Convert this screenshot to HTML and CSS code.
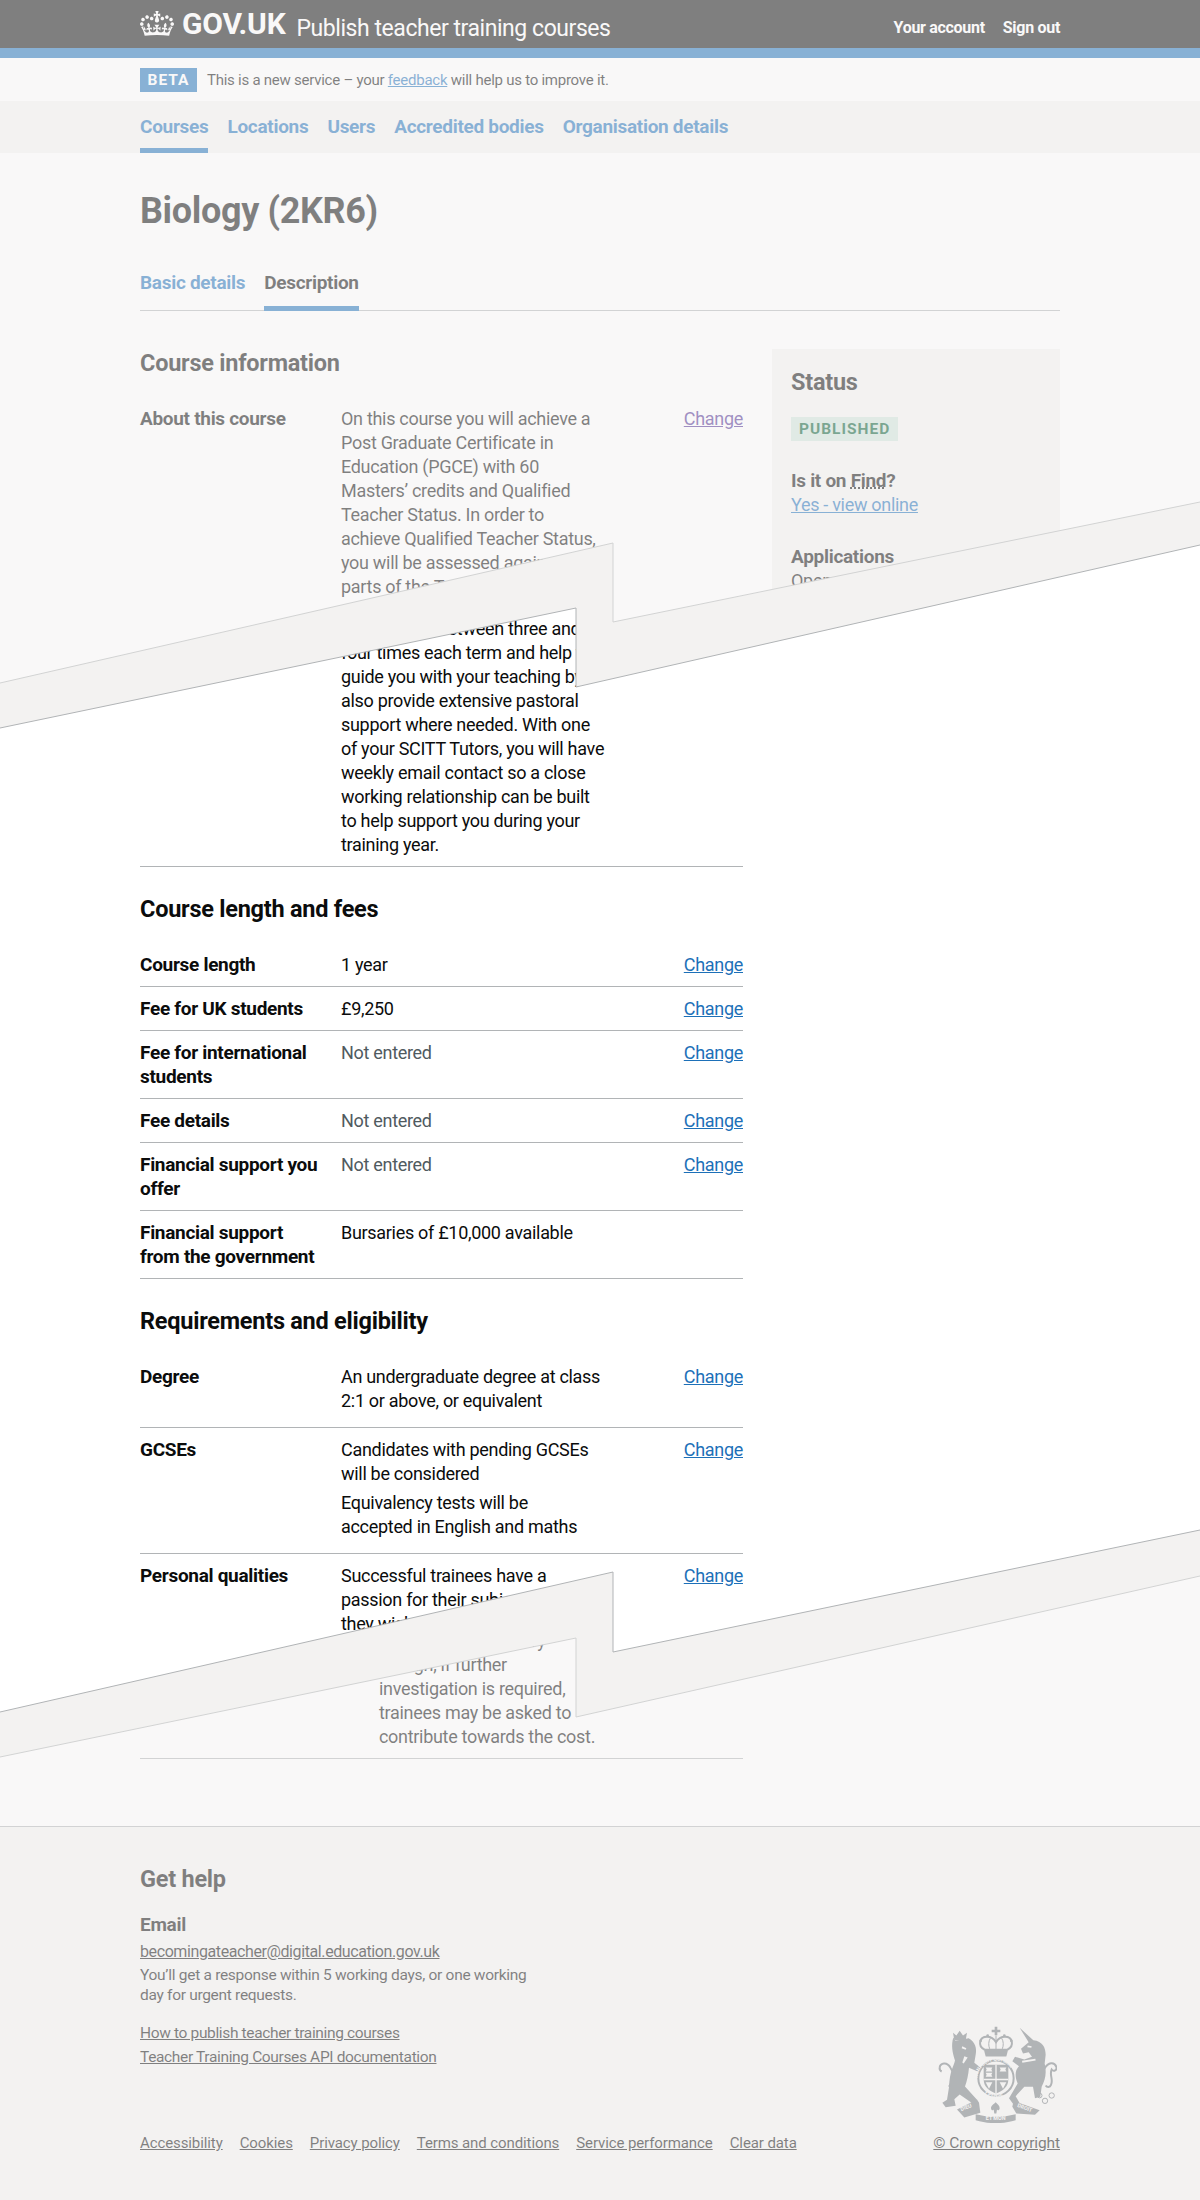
FILE: index.html
```html
<!DOCTYPE html>
<html lang="en">
  <head>
    <meta charset="UTF-8" />
    <meta name="viewport" content="width=device-width, initial-scale=1.0" />
    <title>Biology (2KR6) - Publish teacher training courses</title>
    <link rel="stylesheet" href="styles.css">
  </head>
  <body>
    <header class="site-header">
      <div class="wrap site-header-inner">
        <a class="logo" href="#">
          <svg class="crown" viewBox="0 0 132 97" aria-hidden="true">
            <path fill="currentColor" fill-rule="evenodd" d="M25 30.2c3.5 1.5 7.7-.2 9.1-3.7 1.5-3.6-.2-7.8-3.9-9.2-3.6-1.4-7.6.3-9.1 3.9-1.4 3.5.3 7.5 3.9 9zM9 39.5c3.6 1.5 7.8-.2 9.2-3.7 1.5-3.6-.2-7.8-3.9-9.1-3.6-1.5-7.6.2-9.1 3.8-1.4 3.5.3 7.5 3.8 9zM4.4 57.2c3.5 1.5 7.7-.2 9.1-3.8 1.5-3.6-.2-7.7-3.9-9.1-3.5-1.5-7.6.3-9.1 3.8-1.4 3.5.3 7.6 3.9 9.1zm38.3-21.4c3.5 1.5 7.7-.2 9.1-3.8 1.5-3.6-.2-7.7-3.9-9.1-3.6-1.5-7.6.3-9.1 3.8-1.3 3.6.4 7.7 3.9 9.1zm64.4-5.6c-3.6 1.5-7.8-.2-9.1-3.7-1.5-3.6.2-7.8 3.8-9.2 3.6-1.4 7.7.3 9.2 3.9 1.3 3.5-.4 7.5-3.9 9zm15.9 9.3c-3.6 1.5-7.7-.2-9.1-3.7-1.5-3.6.2-7.8 3.7-9.1 3.6-1.5 7.7.2 9.2 3.8 1.5 3.5-.3 7.5-3.8 9zm4.7 17.7c-3.6 1.5-7.8-.2-9.2-3.8-1.5-3.6.2-7.7 3.9-9.1 3.6-1.5 7.7.3 9.2 3.8 1.3 3.5-.4 7.6-3.9 9.1zM89.3 35.8c-3.6 1.5-7.8-.2-9.2-3.8-1.4-3.6.2-7.7 3.9-9.1 3.6-1.5 7.7.3 9.2 3.8 1.4 3.6-.3 7.7-3.9 9.1zM69.7 17.7l8.9 4.7V9.3l-8.9 2.8c-.2-.3-.5-.6-.9-.9L72.4 0H59.6l3.5 11.2c-.3.3-.6.5-.9.9l-8.8-2.8v13.1l8.8-4.7c.3.3.6.7.9.9l-5 15.4v.1c-.2.8-.4 1.6-.4 2.4 0 4.1 3.1 7.5 7 8.1h.2c.3 0 .7.1 1 .1.4 0 .7 0 1-.1h.2c4-.6 7.1-4.1 7.1-8.1 0-.8-.1-1.7-.4-2.4V34l-5.1-15.4c.4-.2.7-.6 1-.9zM66 92.8c16.9 0 32.8 1.1 47.1 3.2 4-16.9 8.9-26.7 14-33.5l-9.6-3.4c1 4.9 1.1 7.2 0 10.2-1.5-1.4-3-4.3-4.2-8.7L108.6 76c2.8-2 5-3.2 7.5-3.3-4.4 9.4-10 11.9-13.6 11.2-4.3-.8-6.3-4.6-5.6-7.9 1-4.7 5.7-5.9 8-.5 4.3-8.7-3-11.4-7.6-8.8 7.1-7.2 7.9-13.5 2.1-21.1-8 6.1-8.1 12.3-4.5 20.8-4.7-5.4-12.1-2.5-9.5 6.2 3.4-5.2 7.9-2 7.2 3.1-.6 4.3-6.4 7.8-13.5 7.2-10.3-.9-10.9-8-11.2-13.8 2.5-.5 7.1 1.8 11 7.3L80.2 60c-4.1 4.4-8 5.3-12.3 5.4 1.4-4.4 8-11.6 8-11.6H55.5s6.4 7.2 7.9 11.6c-4.2-.1-8-1-12.3-5.4l1.4 16.4c3.9-5.5 8.5-7.7 10.9-7.3-.3 5.8-.9 12.8-11.1 13.8-7.2.6-12.9-2.9-13.5-7.2-.7-5 3.8-8.3 7.1-3.1 2.7-8.7-4.6-11.6-9.4-6.2 3.7-8.5 3.6-14.7-4.6-20.8-5.8 7.6-5 13.9 2.2 21.1-4.7-2.6-11.9.1-7.7 8.8 2.3-5.5 7.1-4.2 8.1.5.7 3.3-1.3 7.1-5.7 7.9-3.5.7-9-1.8-13.5-11.2 2.5.1 4.7 1.3 7.5 3.3l-4.7-15.4c-1.2 4.4-2.7 7.2-4.3 8.7-1.1-3-.9-5.3 0-10.2l-9.5 3.4c5 6.9 9.9 16.7 14 33.5 14.8-2.1 30.8-3.2 47.7-3.2z"/>
          </svg>
          <span class="logo-text">GOV.UK</span>
        </a>
        <a class="service-name" href="#">Publish teacher training courses</a>
        <nav class="account-links">
          <a href="#">Your account</a>
          <a href="#">Sign out</a>
        </nav>
      </div>
    </header>

    <div class="wrap beta-banner">
      <strong class="beta-tag">BETA</strong>
      <span>This is a new service – your <a href="#">feedback</a> will help us to improve it.</span>
    </div>

    <nav class="org-nav">
      <ul class="wrap">
        <li><a class="active" href="#">Courses</a></li>
        <li><a href="#">Locations</a></li>
        <li><a href="#">Users</a></li>
        <li><a href="#">Accredited bodies</a></li>
        <li><a href="#">Organisation details</a></li>
      </ul>
    </nav>

    <main class="wrap">
      <h1>Biology (2KR6)</h1>

      <ul class="tabs">
        <li><a href="#">Basic details</a></li>
        <li><a class="active" href="#">Description</a></li>
      </ul>

      <div class="columns">
        <div class="details">
          <h2>Course information</h2>
          <dl class="summary">
            <div class="row">
              <dt>About this course</dt>
              <dd class="value">
                <p>On this course you will achieve a<br>Post Graduate Certificate in<br>Education (PGCE) with 60<br>Masters’ credits and Qualified<br>Teacher Status. In order to<br>achieve Qualified Teacher Status,<br>you will be assessed against all<br>parts of the Teachers’ Standards.</p>
                <p class="after-tear">will visit you between three and<br>four times each term and help to<br>guide you with your teaching by<br>also provide extensive pastoral<br>support where needed. With one<br>of your SCITT Tutors, you will have<br>weekly email contact so a close<br>working relationship can be built<br>to help support you during your<br>training year.</p>
              </dd>
              <dd class="action"><a class="visited" href="#">Change</a></dd>
            </div>
          </dl>

          <h2>Course length and fees</h2>
          <dl class="summary">
            <div class="row">
              <dt>Course length</dt>
              <dd class="value">1 year</dd>
              <dd class="action"><a href="#">Change</a></dd>
            </div>
            <div class="row">
              <dt>Fee for UK students</dt>
              <dd class="value">£9,250</dd>
              <dd class="action"><a href="#">Change</a></dd>
            </div>
            <div class="row">
              <dt>Fee for international<br>students</dt>
              <dd class="value muted">Not entered</dd>
              <dd class="action"><a href="#">Change</a></dd>
            </div>
            <div class="row">
              <dt>Fee details</dt>
              <dd class="value muted">Not entered</dd>
              <dd class="action"><a href="#">Change</a></dd>
            </div>
            <div class="row">
              <dt>Financial support you<br>offer</dt>
              <dd class="value muted">Not entered</dd>
              <dd class="action"><a href="#">Change</a></dd>
            </div>
            <div class="row">
              <dt>Financial support<br>from the government</dt>
              <dd class="value">Bursaries of £10,000 available</dd>
              <dd class="action"></dd>
            </div>
          </dl>

          <h2>Requirements and eligibility</h2>
          <dl class="summary">
            <div class="row">
              <dt>Degree</dt>
              <dd class="value"><p class="spaced">An undergraduate degree at class<br>2:1 or above, or equivalent</p></dd>
              <dd class="action"><a href="#">Change</a></dd>
            </div>
            <div class="row">
              <dt>GCSEs</dt>
              <dd class="value">
                <p class="spaced">Candidates with pending GCSEs<br>will be considered</p>
                <p class="spaced">Equivalency tests will be<br>accepted in English and maths</p>
              </dd>
              <dd class="action"><a href="#">Change</a></dd>
            </div>
            <div class="row">
              <dt>Personal qualities</dt>
              <dd class="value">
                <p>Successful trainees have a<br>passion for their subject and<br>they wish to share it with others.</p>
                <p class="indented">checks are necessary<br>though, if further<br>investigation is required,<br>trainees may be asked to<br>contribute towards the cost.</p>
              </dd>
              <dd class="action"><a href="#">Change</a></dd>
            </div>
          </dl>
        </div>

        <aside class="status-panel">
          <h3>Status</h3>
          <strong class="tag">Published</strong>
          <h4>Is it on <abbr title="Find postgraduate teacher training">Find</abbr>?</h4>
          <a href="#">Yes - view online</a>
          <h4>Applications</h4>
          <p>Open</p>
        </aside>
      </div>
    </main>

    <footer class="site-footer">
      <div class="wrap footer-grid">
        <div class="help">
          <h2>Get help</h2>
          <h4>Email</h4>
          <a class="email" href="#">becomingateacher@digital.education.gov.uk</a>
          <p>You’ll get a response within 5 working days, or one working<br>day for urgent requests.</p>
          <ul class="help-links">
            <li><a href="#">How to publish teacher training courses</a></li>
            <li><a href="#">Teacher Training Courses API documentation</a></li>
          </ul>
        </div>
        <ul class="meta-links">
          <li><a href="#">Accessibility</a></li>
          <li><a href="#">Cookies</a></li>
          <li><a href="#">Privacy policy</a></li>
          <li><a href="#">Terms and conditions</a></li>
          <li><a href="#">Service performance</a></li>
          <li><a href="#">Clear data</a></li>
        </ul>
        <div class="copyright">
          <svg class="crest" viewBox="110 80 360 290" aria-hidden="true">
            <defs>
              <path id="garter-top" d="M231 240a56 56 0 0 1 112 0"/>
              <path id="garter-bottom" d="M236 262a58 58 0 0 0 102 0"/>
            </defs>
            <g fill="currentColor">
              <!-- crown -->
              <path d="M283 82h8v9h9v7h-9v9h-8v-9h-9v-7h9z"/>
              <path class="crest-line" d="M252 150c-20-10-16-38 8-38 12 0 21 6 27 16 6-10 15-16 27-16 24 0 28 28 8 38"/>
              <path class="crest-line thin" d="M287 108v42M270 116c-6 10-6 22-2 32M304 116c6 10 6 22 2 32"/>
              <path d="M250 148h74l-6 23h-62z"/>
              <circle cx="241" cy="124" r="4"/><circle cx="333" cy="124" r="4"/><circle cx="262" cy="108" r="4"/><circle cx="312" cy="108" r="4"/>
              <!-- garter and shield -->
              <circle class="crest-line" cx="287" cy="236" r="53" stroke-width="21"/>
              <path d="M250 196h74v44c0 22-17 35-37 42-20-7-37-20-37-42z"/>
              <path class="crest-cut" d="M285 196h4v86h-4zM250 238h74v4h-74z"/>
              <path class="crest-cut" d="M256 204l20 0-3 6 3 6h-20l3-6zM298 204l20 0-3 6 3 6h-20l3-6zM256 220h20l-3 6 3 6h-20l3-6zM298 248h20l-10 20zM256 248h20l-10 20z"/>
              <!-- lion -->
              <path d="M162 122l-4-22 10 8 10-14 10 14 12-8-4 22z"/>
              <path d="M165 124l40-8c20 12 25 30 21 50l-4 24 18 14-8 12-26-11c-2 22-6 40-12 56l36 40-12 12-40-28-16 14 4 20-30 4-10-13 14-9 6-38c2-48 14-62 18-80-8-24-12-46-5-69z"/>
              <path class="crest-cut" d="M186 140l12 6-2 5-12-5zM192 170l10 4-12 18-4-3z"/>
              <path class="crest-line" d="M146 262c18-28 14-44 4-58-10-18-30-14-32 0-1 6 2 10 6 12"/>
              <!-- unicorn -->
              <path d="M358 85l41 37c28 3 37 22 37 44l-3 26c7 32 1 50-9 70l-4 30-16 4-6-34h-26l-26 28 16 28-16 6-20-28 26-44c-12-28-4-44 4-52l-20-15 8-13 28 8 23-8-10-14-17 4-6-14 23-20z"/>
              <path class="crest-cut" d="M382 138l12 2-1 5-12-2zM365 184l40-6 1 5-40 7z"/>
              <path class="crest-line" d="M432 208c12-20 30-22 36-6 3 10-8 16-14 8-8 16 6 30-2 46-3 8-12 8-16 2"/>
              <circle class="crest-line thin" cx="418" cy="288" r="7"/>
              <circle class="crest-line thin" cx="434" cy="304" r="8"/>
              <circle class="crest-line thin" cx="454" cy="288" r="8"/>
              <!-- motto scroll -->
              <path d="M170 330l60-30 6 10 4 30-48 14z"/>
              <path d="M226 344c40 10 80 10 120 0v18c-40 12-80 12-120 0z"/>
              <path d="M340 304l78 28-14 14-56-4-12-20z"/>
              <path d="M286 308c6 6 12 10 12 18 0 6-6 8-8 4l-2 12h-6l-2-12c-2 4-8 2-8-4 0-8 8-12 14-18z"/>
            </g>
            <g class="crest-text">
              <text font-size="15"><textPath href="#garter-top" startOffset="4">HONI SOIT QUI MAL</textPath></text>
              <text font-size="15"><textPath href="#garter-bottom" startOffset="24">Y PENSE</textPath></text>
              <text x="183" y="335" font-size="16" transform="rotate(-22 183 335)">DIEU</text>
              <text x="286" y="362" font-size="16" text-anchor="middle">ET MON</text>
              <text x="350" y="322" font-size="16" transform="rotate(20 350 322)">DROIT</text>
            </g>
          </svg>
          <a href="#">© Crown copyright</a>
        </div>
      </div>
    </footer>

    <svg class="tear" viewBox="0 0 1200 2200" aria-hidden="true">
      <polygon class="fade" points="0,0 1200,0 1200,502 613,622 613,543 0,683" />
      <polygon class="band" points="0,683 613,543 613,622 1200,502 1200,545 576,687 576,608 0,728" />
      <polyline class="edge soft" points="0,683 613,543 613,622 1200,502" />
      <polyline class="edge" points="0,728 576,608 576,687 1200,545" />

      <polygon class="fade" points="0,1757 576,1638 576,1717 1200,1576 1200,2200 0,2200" />
      <polygon class="band" points="0,1712 613,1572 613,1652 1200,1530 1200,1576 576,1717 576,1638 0,1757" />
      <polyline class="edge" points="0,1712 613,1572 613,1652 1200,1530" />
      <polyline class="edge soft" points="0,1757 576,1638 576,1717 1200,1576" />
    </svg>
  </body>
</html>
```

FILE: styles.css
```css
* {
  box-sizing: border-box;
}
body {
  margin: 0;
  position: relative;
  font-family: Roboto, "Noto Sans", sans-serif;
  font-size: 18px;
  line-height: 24px;
  letter-spacing: -0.3px;
  color: #0b0c0c;
  background: #fff;
}
a {
  color: #1d70b8;
}
ul,
dl,
dd,
p,
h1,
h2,
h3,
h4 {
  margin: 0;
  padding: 0;
}
ul {
  list-style: none;
}
.wrap {
  width: 920px;
  margin: 0 auto;
}

/* header */
.site-header {
  background: #0b0c0c;
  border-bottom: 10px solid #1d70b8;
  height: 58px;
  color: #fff;
}
.site-header a {
  color: #fff;
  text-decoration: none;
}
.site-header-inner {
  display: flex;
  align-items: baseline;
  height: 48px;
}
.logo {
  display: flex;
  align-items: center;
  gap: 8px;
  height: 48px;
  margin-right: 11px;
}
.crown {
  width: 34px;
  height: 25px;
  margin-top: -2px;
}
.logo-text {
  font-size: 30px;
  font-weight: 700;
  letter-spacing: -0.2px;
}
.service-name {
  font-size: 23px;
  letter-spacing: -0.45px;
}
.account-links {
  display: flex;
  align-self: flex-start;
  gap: 18px;
  margin-left: auto;
  padding-top: 16px;
  font-size: 16px;
  font-weight: 700;
}

/* beta */
.beta-banner {
  display: flex;
  align-items: center;
  gap: 10px;
  height: 43px;
  font-size: 15px;
  letter-spacing: -0.25px;
}
.beta-tag {
  background: #1d70b8;
  color: #fff;
  height: 24px;
  width: 57px;
  text-align: center;
  letter-spacing: 1px;
  font-size: 15.5px;
}

/* navs */
.org-nav {
  background: #f3f2f1;
  height: 52px;
}
.org-nav ul {
  display: flex;
  gap: 19px;
}
.org-nav a {
  display: block;
  height: 52px;
  padding-top: 14px;
  font-size: 19px;
  font-weight: 700;
  text-decoration: none;
}
a.active {
  border-bottom: 5px solid #1d70b8;
}
h1 {
  margin-top: 38px;
  font-size: 36px;
  line-height: 40px;
  font-weight: 700;
  letter-spacing: -0.35px;
}
.tabs {
  display: flex;
  gap: 19px;
  height: 72px;
  margin-top: 8px;
  padding-top: 32px;
  border-bottom: 1px solid #b1b4b6;
}
.tabs a {
  display: block;
  height: 40px;
  font-size: 19px;
  font-weight: 700;
  text-decoration: none;
}
.tabs a.active {
  color: #0b0c0c;
}
.tabs li {
  height: 40px;
}

/* main */
main {
  padding-bottom: 67px;
}
.columns {
  display: grid;
  grid-template-columns: 603px 288px;
  justify-content: space-between;
  margin-top: 38px;
  align-items: start;
}
h2 {
  font-size: 23.5px;
  line-height: 30px;
  font-weight: 700;
  margin: 27px 0 19px;
  letter-spacing: -0.25px;
}
.details > h2:first-child {
  margin-top: -1px;
}
.row {
  display: flex;
  padding: 10px 0 9px;
  border-bottom: 1px solid #b1b4b6;
}
.row dt {
  width: 201px;
  font-size: 19px;
  font-weight: 700;
}
.value {
  flex: 1;
}
.value.muted {
  color: #505a5f;
}
.value .after-tear {
  margin-top: 18px;
}
.value .spaced {
  margin-bottom: 5px;
}
.value .indented {
  margin-top: -7px;
  padding-left: 38px;
}
.action {
  text-align: right;
}
a.visited {
  color: #4c2c92;
}

/* status */
.status-panel {
  background: #f3f2f1;
  padding: 18px 19px;
  height: 290px;
  clip-path: polygon(0 0, 100% 0, 100% 207px, 0 272px);
}
.status-panel h3 {
  font-size: 23.5px;
  line-height: 30px;
  font-weight: 700;
  letter-spacing: -0.25px;
}
.tag {
  display: inline-block;
  margin: 20px 0 28px;
  padding: 0 8px;
  height: 24px;
  background: #cce2d8;
  color: #005a30;
  font-size: 15.5px;
  text-transform: uppercase;
  letter-spacing: 1px;
}
.status-panel h4 {
  font-size: 19px;
  font-weight: 700;
}
.status-panel a + h4 {
  margin-top: 28px;
}
abbr {
  text-decoration: underline dotted;
}

/* footer */
.site-footer {
  background: #f3f2f1;
  border-top: 1px solid #b1b4b6;
  height: 375px;
  font-size: 15.5px;
}
.site-footer a {
  color: #0b0c0c;
}
.footer-grid {
  display: grid;
  grid-template-columns: 1fr auto;
  padding-top: 37px;
}
.help {
  grid-column: 1;
}
.help h2 {
  margin: 0 0 19px;
}
.help h4 {
  font-size: 19px;
  font-weight: 700;
  margin-bottom: 3px;
}
.help .email {
  display: block;
  font-size: 16px;
  letter-spacing: -0.4px;
  margin-bottom: 1px;
}
.help p {
  line-height: 20px;
}
.help-links {
  margin-top: 16px;
  letter-spacing: -0.35px;
}
.meta-links {
  grid-column: 1;
  display: flex;
  gap: 17px;
  margin-top: 62px;
  font-size: 15px;
  letter-spacing: -0.1px;
}
.copyright {
  grid-column: 2;
  grid-row: 1 / span 2;
  align-self: end;
  display: flex;
  flex-direction: column;
  align-items: flex-end;
  letter-spacing: -0.1px;
}
.crest {
  width: 120px;
  height: 97px;
  color: #6f777b;
  margin: 0 3px 8px 0;
}
.crest-line {
  fill: none;
  stroke: currentColor;
  stroke-width: 6;
}
.crest-line.thin {
  stroke-width: 3;
}
.crest-cut {
  fill: #f3f2f1;
}
.crest-text {
  fill: #f3f2f1;
  font-weight: 700;
  letter-spacing: 0;
}

/* torn page overlay */
.tear {
  position: absolute;
  top: 0;
  left: 0;
  width: 1200px;
  height: 2200px;
  pointer-events: none;
}
.fade {
  fill: #f3f2f1;
  opacity: 0.5;
}
.band {
  fill: #f3f2f1;
}
.edge {
  fill: none;
  stroke: #b1b4b6;
  stroke-width: 1;
}
.edge.soft {
  stroke: #d2d3d3;
}
```
